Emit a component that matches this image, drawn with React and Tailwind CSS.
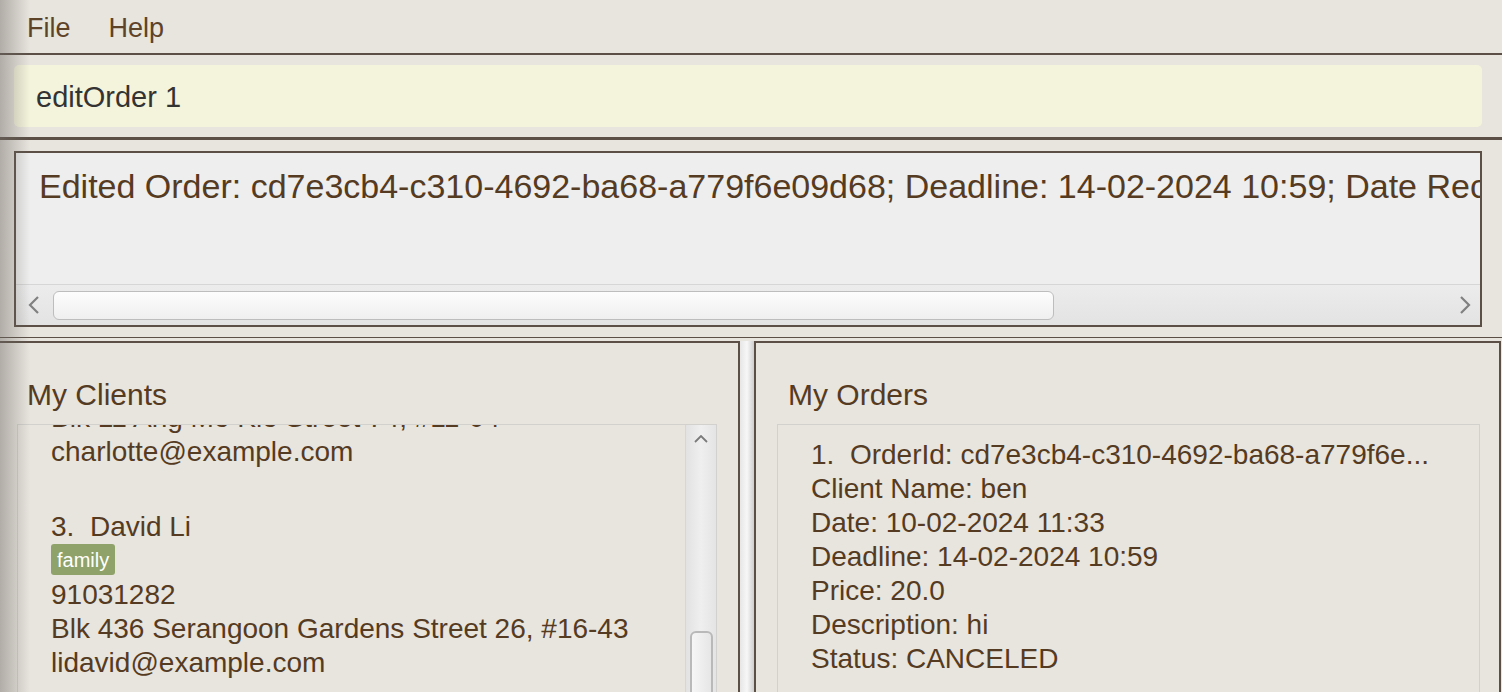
import React from "react";

// thin chevron used in the scroll bars
const Chevron = ({ dir }) => {
  if (dir === "up") {
    return (
      <svg viewBox="0 0 14 8" className="h-[8px] w-[14px]">
        <polyline points="1,7 7,1 13,7" fill="none" stroke="#7a7a7a" strokeWidth="1.8" />
      </svg>
    );
  }
  const pts = dir === "left" ? "10,1 2,9 10,17" : "2,1 10,9 2,17";
  return (
    <svg viewBox="0 0 12 18" className="h-[18px] w-[12px]">
      <polyline points={pts} fill="none" stroke="#808080" strokeWidth="2.2" />
    </svg>
  );
};

const HScrollbar = () => (
  <div className="flex h-[41px] items-center border-t border-[#d6d6d6] bg-linear-to-b from-[#ececec] to-[#e3e3e3]">
    <div className="flex w-[35px] justify-center">
      <Chevron dir="left" />
    </div>
    <div className="ml-[2px] h-[29px] w-[1001px] rounded-[6px] border border-[#bdbdbd] bg-linear-to-b from-[#fdfdfd] to-[#efefef]" />
    <div className="flex-1" />
    <div className="flex w-[30px] justify-center">
      <Chevron dir="right" />
    </div>
  </div>
);

const VScrollbar = () => (
  <div className="flex w-[31px] flex-col items-center border-l border-[#d6d6d6] bg-linear-to-r from-[#e2e2e2] via-[#efefef] to-[#e4e4e4]">
    <div className="mt-[9px] flex h-[10px] items-center">
      <Chevron dir="up" />
    </div>
    <div className="flex-1" />
    <div className="mb-[-20px] h-[112px] w-[23px] shrink-0 rounded-[6px] border-2 border-[#b9b9b9] bg-linear-to-r from-[#f6f6f6] to-[#e6e6e6]" />
  </div>
);

const Line = ({ children }) => (
  <div className="h-[34px] whitespace-pre leading-[34px]">{children}</div>
);

export default function App() {
  return (
    <div className="relative h-[692px] w-[1502px] overflow-hidden bg-[#e8e4de] font-['Liberation_Sans',Arial,sans-serif] text-[#553b22]">
      {/* menu bar */}
      <div className="flex h-[53px] items-center gap-[38px] pl-[27px] pt-[3px] text-[27px] text-[#5e4329]">
        <span>File</span>
        <span>Help</span>
      </div>
      <div className="h-[2px] bg-[#5b4f46]" />

      {/* command box */}
      <div className="py-[10px] pl-[14px] pr-[20px]">
        <div className="flex h-[62px] items-center rounded-[5px] bg-[#f4f4dc] pl-[22px] pt-[3px] text-[29px] text-[#333333]">
          editOrder 1
        </div>
      </div>
      <div className="h-[3px] bg-[#5b4f46]" />

      {/* result display */}
      <div className="pb-[10px] pl-[14px] pr-[20px] pt-[11px]">
        <div className="flex h-[176px] flex-col border-2 border-[#5b4f46] bg-[#eeeeee]">
          <div className="flex-1 overflow-hidden whitespace-nowrap pl-[23px] pt-[13px] text-[34px] leading-[40px]">
            Edited Order: cd7e3cb4-c310-4692-ba68-a779f6e09d68; Deadline: 14-02-2024 10:59; Date Received: 10-02-2024 11:33
          </div>
          <HScrollbar />
        </div>
      </div>
      <div className="h-[1px] bg-[#5b4f46]" />
      <div className="h-[3px]" />

      {/* panels */}
      <div className="flex h-[351px]">
        <div className="w-[740px] border-r-2 border-t-2 border-[#5b4f46] pl-[17px]">
          <div className="pl-[10px] pt-[34px] text-[30px] leading-[36px]">My Clients</div>
          <div className="mt-[11px] flex h-[300px] w-[700px] border border-[#d3d1cd]">
            <div className="flex-1 overflow-hidden pl-[33px] text-[28px]">
              <div className="-mt-[24px] pb-[20px]">
                <Line>Blk 11 Ang Mo Kio Street 74, #11-04</Line>
                <Line>charlotte@example.com</Line>
              </div>
              <div className="pt-[21px]">
                <Line>3.  David Li</Line>
                <div className="flex h-[34px] items-start">
                  <span className="flex h-[31px] items-center rounded-[3px] bg-[#8fa269] px-[6px] text-[20px] text-white">
                    family
                  </span>
                </div>
                <Line>91031282</Line>
                <Line>Blk 436 Serangoon Gardens Street 26, #16-43</Line>
                <Line>lidavid@example.com</Line>
              </div>
            </div>
            <VScrollbar />
          </div>
        </div>

        {/* splitter */}
        <div className="w-[14px] bg-linear-to-r from-[#e6e6e6] via-[#f7f7f7] to-[#cfcfcf]" />

        <div className="mr-[1px] flex-1 border-x-2 border-t-2 border-[#5b4f46] pl-[21px]">
          <div className="pl-[11px] pt-[34px] text-[30px] leading-[36px]">My Orders</div>
          <div className="mt-[11px] h-[300px] w-[703px] border border-[#d3d1cd] pl-[33px] pt-[13px] text-[28px]">
            <Line>1.  OrderId: cd7e3cb4-c310-4692-ba68-a779f6e...</Line>
            <Line>Client Name: ben</Line>
            <Line>Date: 10-02-2024 11:33</Line>
            <Line>Deadline: 14-02-2024 10:59</Line>
            <Line>Price: 20.0</Line>
            <Line>Description: hi</Line>
            <Line>Status: CANCELED</Line>
          </div>
        </div>
      </div>

      {/* window edge shadow */}
      <div className="pointer-events-none absolute left-0 top-0 h-full w-[30px] bg-linear-to-r from-[rgba(110,105,100,0.45)] to-transparent" />
    </div>
  );
}
